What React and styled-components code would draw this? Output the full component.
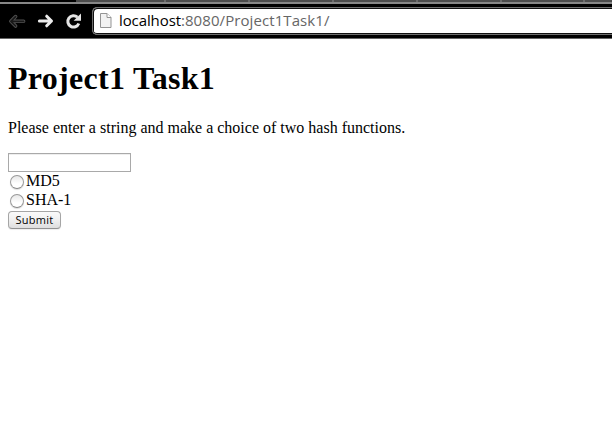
import React from "react";
import styled, { createGlobalStyle } from "styled-components";

const GlobalStyle = createGlobalStyle`
  * { box-sizing: border-box; }
  html, body { margin: 0; background: #fff; overflow: hidden; }
`;

const Window = styled.div`
  width: 612px;
  height: 431px;
  overflow: hidden;
  background: #fff;
  color: #000;
  font: 16px/18px "Liberation Serif", serif;
`;

const TabStrip = styled.div`
  display: flex;
  height: 2px;
  padding-left: 76px;
  background: #000;
`;

const Tab = styled.div`
  flex: none;
  width: ${({ $width }) => $width}px;
  background: #4c4c4c;
  border-right: 2px solid #6c6c6c;
`;

const Toolbar = styled.header`
  display: flex;
  height: 37px;
  background: #000;
  border-top: 2px solid #878787;
  border-bottom: 1px solid #666;
`;

const NavButtons = styled.nav`
  display: flex;
  flex: none;
  gap: 10px;
  width: 92px;
  padding: 8px 0 0 8px;
`;

const NavIcon = styled.svg`
  display: block;
  flex: none;
  width: 18px;
  height: 18px;
  overflow: visible;
`;

const AddressBar = styled.div`
  display: flex;
  flex: 1;
  height: 28px;
  margin-top: 3px;
  padding: 3px 0 0 6px;
  border: 1px solid #6e6e6e;
  border-right: 0;
  border-radius: 5px 0 0 5px;
  background: #fff;
  box-shadow: inset 1px 1px 0 #111, inset 0 -1px 0 #111;
`;

const PageIcon = styled.svg`
  display: block;
  flex: none;
  width: 14px;
  height: 18px;
`;

const Url = styled.div`
  margin-left: 6px;
  font: 15px/18px "Open Sans", sans-serif;
  letter-spacing: 0.08px;
  white-space: nowrap;
  color: #666;
`;

const Host = styled.span`
  color: #000;
  letter-spacing: -0.1px;
`;

const Page = styled.main`
  padding: 21px 8px 0;
`;

const Title = styled.h1`
  margin: 0;
  font-size: 32px;
  line-height: 37px;
  font-weight: bold;
  letter-spacing: 0.3px;
`;

const Intro = styled.p`
  margin: 22px 0 16px;
  white-space: nowrap;
`;

const Form = styled.form`
  display: flex;
  flex-direction: column;
  align-items: flex-start;
`;

const TextInput = styled.input`
  display: block;
  width: 123px;
  height: 19px;
  margin: 0;
  padding: 1px 3px;
  border: 1px solid #a9a9a9;
  border-radius: 0;
  outline: none;
  background: #fff;
  box-shadow: inset 0 1px 0 #eee;
  font: 11px "Open Sans", sans-serif;
`;

const Option = styled.label`
  display: flex;
  height: 19px;
  padding-left: 2px;
  line-height: 18px;
`;

const Radio = styled.input`
  appearance: none;
  flex: none;
  width: 14px;
  height: 14px;
  margin: 3px 2px 0 0;
  border: 1px solid #999;
  border-bottom-color: #858585;
  border-radius: 50%;
  background: linear-gradient(#e8e8e8, #fff 65%);
  box-shadow: 0 1px 1px #ddd;
`;

const SubmitButton = styled.button`
  width: 53px;
  height: 18px;
  margin-top: 1px;
  padding: 0;
  border: 1px solid #a5a5a5;
  border-bottom-color: #929292;
  border-radius: 4px;
  background: linear-gradient(#fafafa, #f1f1f1 45%, #dedede);
  box-shadow: 0 1px 1px #eee;
  color: #000;
  font: 11px/14px "Open Sans", sans-serif;
  letter-spacing: 0.3px;
`;

const backArrow = "M15.6 9.3H3M7.6 4.6L2.9 9.3L7.6 14";

export default function App() {
  return (
    <>
      <GlobalStyle />
      <Window>
        <TabStrip>
          {[90, 84, 84, 84, 84, 83, 84].map((width, index) => (
            <Tab key={index} $width={width} />
          ))}
        </TabStrip>
        <Toolbar>
          <NavButtons>
            <NavIcon viewBox="0 0 18 18" aria-label="Back" fill="none" strokeLinecap="round" strokeLinejoin="round">
              <path d={backArrow} stroke="#505050" strokeWidth="3.6" />
              <path d={backArrow} stroke="#181818" strokeWidth="1.7" />
            </NavIcon>
            <NavIcon viewBox="0 0 18 18" aria-label="Forward">
              <path d="M3.4 9H15.4M10.7 4.2L15.5 9L10.7 13.8" fill="none" stroke="#ededed" strokeWidth="3" strokeLinejoin="round" strokeLinecap="round" />
            </NavIcon>
            <NavIcon viewBox="0 0 18 18" aria-label="Reload">
              <path d="M13.4 5.2A5.7 5.7 0 1 0 14.8 11.5" fill="none" stroke="#e5e5e5" strokeWidth="3" />
              <path d="M17 1.5V8.8H9.6Z" fill="#e5e5e5" />
            </NavIcon>
          </NavButtons>
          <AddressBar>
            <PageIcon viewBox="0 0 14 18">
              <path d="M1.5 2.5H8L12 6.5V16.5H1.5Z" fill="#f2f2f2" stroke="#949494" />
              <path d="M8 2.5V6.5H12" fill="#fff" stroke="#949494" />
            </PageIcon>
            <Url>
              <Host>localhost</Host>:8080/Project1Task1/
            </Url>
          </AddressBar>
        </Toolbar>
        <Page>
          <Title>Project1 Task1</Title>
          <Intro>
            Please enter a string and make a choice of two hash functions.
          </Intro>
          <Form onSubmit={(event) => event.preventDefault()}>
            <TextInput type="text" aria-label="String" />
            <Option>
              <Radio type="radio" name="hash" />
              MD5
            </Option>
            <Option>
              <Radio type="radio" name="hash" />
              SHA-1
            </Option>
            <SubmitButton type="submit">Submit</SubmitButton>
          </Form>
        </Page>
      </Window>
    </>
  );
}
